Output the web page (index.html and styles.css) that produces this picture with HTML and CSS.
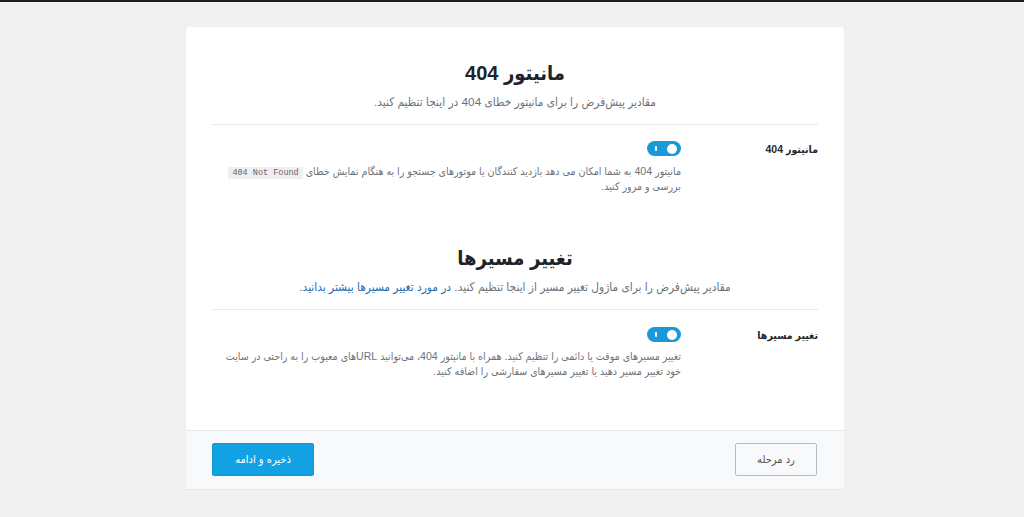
FILE: index.html
```html
<!DOCTYPE html>
<html lang="fa" dir="rtl">
<head>
<meta charset="utf-8">
<title>مانیتور 404</title>
<link rel="stylesheet" href="styles.css">
</head>
<body>
<div class="topbar"></div>
<div class="page">
<div class="card">
  <div class="card-body">
    <header class="section-head first">
      <h1 class="title">مانیتور 404</h1>
      <p class="subtitle">مقادیر پیش‌فرض را برای مانیتور خطای 404 در اینجا تنظیم کنید.</p>
    </header>
    <div class="row">
      <div class="label">مانیتور 404</div>
      <div class="field">
        <span class="toggle"><span class="bar"></span><span class="knob"></span></span>
        <p class="desc">مانیتور 404 به شما امکان می دهد بازدید کنندگان یا موتورهای جستجو را به هنگام نمایش خطای <code>404 Not Found</code> بررسی و مرور کنید.</p>
      </div>
    </div>
    <header class="section-head second">
      <h1 class="title">تغییر مسیرها</h1>
      <p class="subtitle">مقادیر پیش‌فرض را برای ماژول تغییر مسیر از اینجا تنظیم کنید. <a href="#" class="link">در مورد تغییر مسیرها بیشتر بدانید.</a></p>
    </header>
    <div class="row second-row">
      <div class="label">تغییر مسیرها</div>
      <div class="field">
        <span class="toggle"><span class="bar"></span><span class="knob"></span></span>
        <p class="desc">تغییر مسیرهای موقت یا دائمی را تنظیم کنید. همراه با مانیتور 404، می‌توانید URLهای معیوب را به راحتی در سایت خود تغییر مسیر دهید یا تغییر مسیرهای سفارشی را اضافه کنید.</p>
      </div>
    </div>
  </div>
  <footer class="card-footer">
    <button class="btn btn-secondary" type="button">رد مرحله</button>
    <button class="btn btn-primary" type="button">ذخیره و ادامه</button>
  </footer>
</div>
</div>
</body>
</html>
```
FILE: styles.css
```css
html, body {
  margin: 0;
  padding: 0;
}
body {
  background: #f1f1f2;
  font-family: "Liberation Sans", "DejaVu Sans Condensed", "DejaVu Sans", sans-serif;
  color: #23282d;
  height: 517px;
  overflow: hidden;
}
.topbar {
  height: 2px;
  background: #1e1e1e;
}
.page {
  padding: 25px 0 0 6px;
}
.card {
  width: 658px;
  margin: 0 auto;
  background: #fff;
  border-radius: 3px;
  box-shadow: 0 1px 2px rgba(0,0,0,0.06);
  overflow: hidden;
}
.card-body {
  padding: 30px 26px 51px;
}
.section-head {
  text-align: center;
  border-bottom: 1px solid #e8e8e8;
  padding-bottom: 13px;
}
.section-head.second {
  margin-top: 48px;
  padding-bottom: 13px;
}
.title {
  margin: 0;
  font-size: 20px;
  line-height: 32px;
  font-weight: bold;
  color: #1d2327;
}
.subtitle {
  margin: 4px 0 0;
  font-size: 11.8px;
  line-height: 18px;
  color: #6e7276;
}
.link {
  color: #1f6eb0;
  text-decoration: none;
}
.row {
  display: flex;
  padding-top: 16px;
}
.row.second-row {
  padding-top: 17px;
}
.label {
  width: 137px;
  flex: none;
  font-size: 10.5px;
  font-weight: bold;
  line-height: 15px;
  padding-top: 1px;
  color: #23282d;
}
.field {
  flex: 1;
}
.toggle {
  display: block;
  position: relative;
  width: 34px;
  height: 15px;
  border-radius: 8px;
  background: #1a98da;
}
.toggle .knob {
  position: absolute;
  top: 2.5px;
  right: 4px;
  width: 10px;
  height: 10px;
  border-radius: 50%;
  background: #fff;
}
.toggle .bar {
  position: absolute;
  top: 5px;
  left: 8px;
  width: 2px;
  height: 5px;
  background: #fff;
  border-radius: 1px;
}
.desc {
  margin: 8px 0 0;
  padding-left: 10px;
  font-size: 10.6px;
  line-height: 15px;
  color: #6f7377;
}
.second-row .desc {
  margin-top: 7px;
}
code {
  font-family: "Liberation Mono", "DejaVu Sans Mono", monospace;
  font-size: 8.5px;
  line-height: 12px;
  background: #efefef;
  color: #666;
  padding: 1px 4px;
  white-space: nowrap;
  direction: ltr;
  unicode-bidi: isolate;
}
.card-footer {
  display: flex;
  justify-content: space-between;
  align-items: center;
  background: #f8f9fa;
  border-top: 1px solid #e6e8ea;
  padding: 12px 27px 13px 26px;
}
.btn {
  font-family: "DejaVu Sans Condensed", "DejaVu Sans", sans-serif;
  font-size: 11px;
  height: 33px;
  border-radius: 2px;
  cursor: pointer;
}
.btn-secondary {
  width: 82px;
  background: #f8f9fa;
  border: 1px solid #b8bcc0;
  color: #555;
}
.btn-primary {
  width: 102px;
  background: #12a1e3;
  border: 1px solid #0f98d6;
  color: #fff;
}
```
